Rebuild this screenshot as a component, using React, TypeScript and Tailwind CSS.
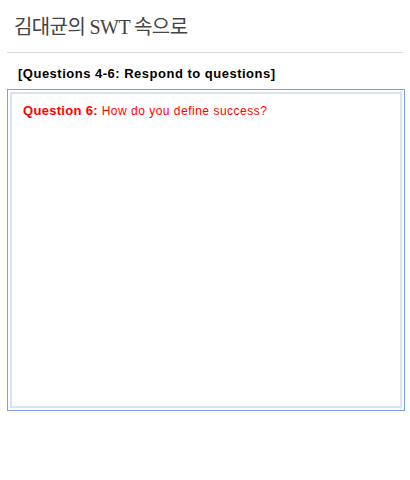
import React from "react";

const App: React.FC = () => {
    return (
        <div className="w-[410px] h-[480px] bg-white font-['Liberation_Sans','Noto_Sans_CJK_KR',sans-serif]">
            <div className="pt-[13px] pl-[14px] h-[52px]">
                <h1 className="text-[20px] leading-[28px] text-[#444] font-['Liberation_Serif','Noto_Sans_CJK_KR',serif] tracking-[-0.6px]">
                    김대균의 SWT 속으로
                </h1>
            </div>
            <div className="mx-[7px] h-[1px] bg-[#d8d8d8]"></div>
            <div className="pl-[18px] pt-[13px] h-[36px]">
                <p className="text-[13px] leading-[16px] font-bold text-black tracking-[0.5px]">
                    [Questions 4-6: Respond to questions]
                </p>
            </div>
            <div className="mx-[7px] w-[398px] h-[322px] border border-[#7fa0e8] p-[2px]">
                <div className="h-full border-2 border-[#d6e4f5] px-[11px] pt-[9px]">
                    <p className="text-[12px] leading-[16px] text-[#ff0000] tracking-[0.5px]">
                        <span className="font-bold text-[13px] tracking-[0.3px]">Question 6:</span> How do you define success?
                    </p>
                </div>
            </div>
        </div>
    );
};

export default App;
